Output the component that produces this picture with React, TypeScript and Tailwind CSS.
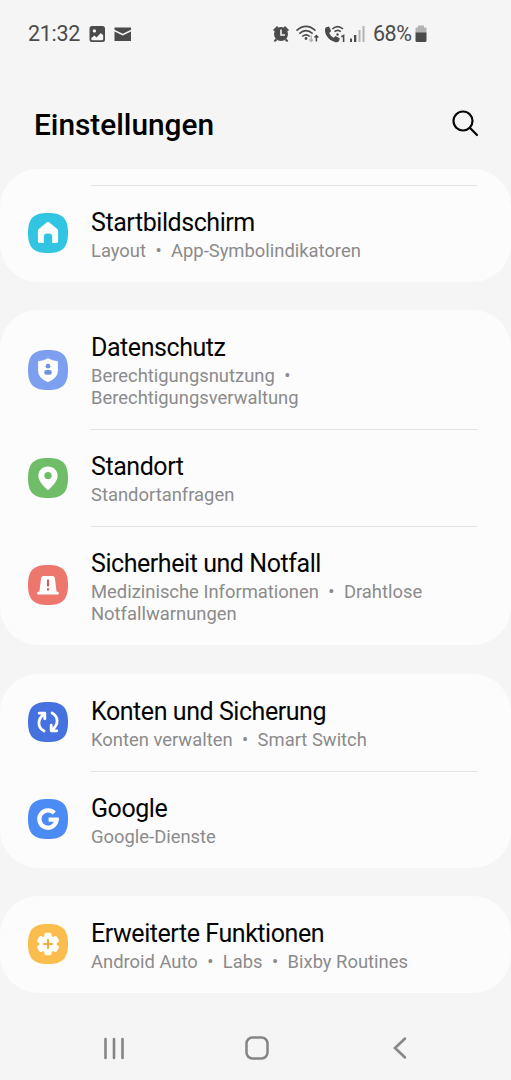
import React from 'react';

interface Item {
  title: string;
  lines: string[][];
  color: string;
  glyph: React.ReactNode;
}

const SQUIRCLE = 'M20 0C34.5 0 40 5.5 40 20S34.5 40 20 40 0 34.5 0 20 5.5 0 20 0Z';

const home: Item = {
  title: 'Startbildschirm',
  lines: [['Layout', 'App-Symbolindikatoren']],
  color: '#32c5e2',
  glyph: (
    <path
      d="M19 9.2a1.6 1.6 0 0 1 2 0l8 6.500q1.100.9 1.100 2.200v10.300q0 1.800-1.800 1.800h-4.100v-6.600a3 3 0 0 0-3-3h-2.400a3 3 0 0 0-3 3V30h-4.100q-1.800 0-1.800-1.800V17.900q0-1.300 1.100-2.200Z"
      fill="#fff"
    />
  ),
};

const privacy: Item[] = [
  {
    title: 'Datenschutz',
    lines: [['Berechtigungsnutzung', ''], ['Berechtigungsverwaltung']],
    color: '#7ca0ef',
    glyph: (
      <>
        <path d="M20 8.2q4.2 2.3 9.9 3v9.3c0 5.5-3.6 8.7-9.9 11.7-6.3-3-9.9-6.2-9.9-11.7v-9.3q5.700-.7 9.900-3Z" fill="#fff" />
        <circle cx="20" cy="16.200" r="2.400" fill="#7193df" />
        <rect x="16.200" y="20" width="7.600" height="4.800" rx="2.400" fill="#7193df" />
      </>
    ),
  },
  {
    title: 'Standort',
    lines: [['Standortanfragen']],
    color: '#6fbd69',
    glyph: (
      <>
        <path d="M20 8.500c5.500 0 9.600 4 9.600 9.300 0 5.200-4.700 9.900-8.300 13.500q-1.300 1.200-2.600 0C15.100 27.700 10.400 23 10.400 17.800c0-5.300 4.100-9.300 9.600-9.300Z" fill="#fff" />
        <circle cx="20" cy="17.600" r="3.700" fill="#6fbd69" />
      </>
    ),
  },
  {
    title: 'Sicherheit und Notfall',
    lines: [['Medizinische Informationen', 'Drahtlose'], ['Notfallwarnungen']],
    color: '#ed766d',
    glyph: (
      <>
        <path d="M15.600 11h8.800q2.200 0 2.500 2.200l1.700 13.500h1q1.100 0 1.100 1.100v1.700H9.300v-1.700q0-1.100 1.100-1.100h1l1.700-13.500q.3-2.200 2.500-2.200Z" fill="#fff" />
        <path d="M19 14.400h2v7.200h-2zM19 23.200h2v2.300h-2z" fill="#e0584f" />
      </>
    ),
  },
];

const accounts: Item[] = [
  {
    title: 'Konten und Sicherung',
    lines: [['Konten verwalten', 'Smart Switch']],
    color: '#4672e0',
    glyph: (
      <g fill="none" stroke="#fff" strokeWidth="2.800" strokeLinecap="round" strokeLinejoin="round">
        <path d="M16 29C9.400 25.700 9 17.500 16 12.200M11.200 11.200h5.600v5.600" />
        <path d="M24 11c6.600 3.300 7 11.500 0 16.800M28.800 28.800h-5.600v-5.600" />
      </g>
    ),
  },
  {
    title: 'Google',
    lines: [['Google-Dienste']],
    color: '#4b8bf3',
    glyph: <path d="M26.300 14A8.700 8.700 0 1 0 28.700 20.700H20.600" fill="none" stroke="#fff" strokeWidth="4.200" />,
  },
];

const advanced: Item = {
  title: 'Erweiterte Funktionen',
  lines: [['Android Auto', 'Labs', 'Bixby Routines']],
  color: '#fcbd4f',
  glyph: (
    <>
      <g fill="#fff">
        <circle cx="20" cy="20" r="8.700" />
        <rect x="16.500" y="8.700" width="7" height="22.600" rx="1.800" />
        <rect x="16.500" y="8.700" width="7" height="22.600" rx="1.800" transform="rotate(60 20 20)" />
        <rect x="16.500" y="8.700" width="7" height="22.600" rx="1.800" transform="rotate(120 20 20)" />
      </g>
      <path d="M20 15.300v9.400M15.300 20h9.400" stroke="#f0aa39" strokeWidth="2" />
    </>
  ),
};

function Row({ item, divider }: { item: Item; divider?: boolean }) {
  return (
    <div className="flex pl-7 pr-[34px]">
      <div className="flex w-[63px] shrink-0 items-center pb-[2px]">
        <svg width="40" height="40" viewBox="0 0 40 40">
          <path d={SQUIRCLE} fill={item.color} />
          {item.glyph}
        </svg>
      </div>
      <div className={`flex-1 pb-5 pt-[22px] ${divider ? 'border-b border-[#e3e3e3]' : ''}`}>
        <div className="mb-[2px] text-[25px] leading-[30px] tracking-[-0.440px] text-[#050505]">{item.title}</div>
        {item.lines.map((parts, i) => (
          <div key={i} className="flex text-[18.400px] leading-[22px] text-[#8b8b8b]">
            {parts.map((part, j) => (
              <React.Fragment key={j}>
                {j > 0 && <span className="w-[25px] text-center">•</span>}
                <span>{part}</span>
              </React.Fragment>
            ))}
          </div>
        ))}
      </div>
    </div>
  );
}

function Card({ items }: { items: Item[] }) {
  return (
    <section className="rounded-[38px] bg-[#fcfcfc] pt-px">
      {items.map((item, i) => (
        <Row key={item.title} item={item} divider={i < items.length - 1} />
      ))}
    </section>
  );
}

function StatusBar() {
  return (
    <div className="flex h-[68px] items-center pl-7 text-[21.500px] tracking-[-0.300px] text-[#4b4b4b]">
      <span className="w-[61px]">21:32</span>
      {/* Notifications */}
      <svg width="44" height="20" viewBox="0 0 44 20" fill="#4b4b4b">
        <path fillRule="evenodd" d="M3 2h10.500a2.500 2.500 0 0 1 2.500 2.500v11a2.500 2.500 0 0 1-2.500 2.500H3a2.500 2.500 0 0 1-2.500-2.500v-11A2.500 2.500 0 0 1 3 2Zm2.400 3.200a1.700 1.700 0 1 0 0 3.400 1.700 1.700 0 0 0 0-3.400ZM2.300 14.900q0 1.300 1.300 1.300h9.300q1.300 0 1.300-1.300v-3.600l-2.400-2.400-4.300 4.500-2-1.900-3.200 2.600Z" />
        <path d="M25.500 3.500H42v2.300l-8.200 4-8.300-4ZM25.500 7.500l8.300 4 8.200-4V17H25.500Z" />
      </svg>
      {/* Connectivity */}
      <svg className="ml-[139px]" width="94" height="20" viewBox="0 0 94 20">
        <g fill="#4b4b4b">
          <circle cx="9" cy="10" r="7" />
          <path d="m1 6 4-4 1.400 1.300-4 4ZM17 6l-4-4-1.400 1.300 4 4ZM3.500 14.500 1.700 17l1.300 1 2.400-2ZM14.500 14.500l1.800 2.500-1.300 1-2.400-2Z" />
          <circle cx="34" cy="14.500" r="1.400" />
          <path d="M54.200 3.300 57 2.500l2.200 4.600-2 1.900q1.300 3.100 4.400 4.800l2-1.700 4.300 2.500-1 2.700q-1.300 1.500-4 .8C56.200 16 52.600 10.500 53 5.300q.2-1.300 1.200-2Z" />
          <circle cx="65.500" cy="10.500" r="1.200" />
          <path d="M78 14.500h2V18h-2zM82 11h2.300v7H82z" />
        </g>
        <path d="M9 5.500V11h4" fill="none" stroke="#f5f5f5" strokeWidth="1.600" />
        <g fill="none" stroke="#4b4b4b" strokeWidth="1.600">
          <path d="M24.500 6.700q9.500-8.500 19 0M27.300 9.700q6.700-6 13.400 0M30.200 12.500q3.800-3.300 7.600 0" />
          <path d="M60.300 5q5.300-4.700 10.700 0M62.500 7.700q3.200-2.700 6.300 0" />
          <path d="M44.400 17.500v-5.700M42.500 13.500l1.900-2 1.900 2" strokeWidth="1.500" />
          <path d="M69.300 12.800l2.300-1.300V18" />
        </g>
        <path d="M39.200 11.500v5.700M37.300 15.500l1.900 2 1.900-2" fill="none" stroke="#b3b3b3" strokeWidth="1.500" />
        <path d="M86.500 6h2v12h-2zM90.500 2h2v16h-2z" fill="#b3b3b3" />
      </svg>
      <span className="ml-[7px] w-[42px] tracking-[-0.500px]">68%</span>
      <svg width="12" height="20" viewBox="0 0 12 20">
        <path d="M3 1.500h6v2h1.500q1 0 1 1V9H.5V4.500q0-1 1-1H3Z" fill="#b3b3b3" />
        <path d="M.5 8.500h11v8q0 1.500-1.500 1.500H2q-1.500 0-1.500-1.500Z" fill="#4b4b4b" />
      </svg>
    </div>
  );
}

export default function App() {
  return (
    <div className="flex h-[1080px] w-[511px] flex-col overflow-hidden bg-[#f5f5f5] font-[Roboto,sans-serif]">
      <StatusBar />
      <header className="flex h-[101px] items-start justify-between pl-[34px] pr-8 pt-[38px]">
        <h1 className="text-[29.800px] font-medium leading-[38px] text-black">Einstellungen</h1>
        <svg className="mt-[3px]" width="28" height="28" viewBox="0 0 28 28" fill="none" stroke="#050505" strokeWidth="2.200">
          <circle cx="12" cy="12" r="9.500" />
          <path d="m18.800 18.800 7.200 7.200" strokeLinecap="round" />
        </svg>
      </header>

      <main className="flex flex-col gap-[28.400px]">
        <section className="rounded-[38px] bg-[#fcfcfc] pt-4">
          <div className="ml-[91px] mr-[34px] h-px bg-[#e3e3e3]" />
          <Row item={home} />
        </section>
        <Card items={privacy} />
        <Card items={accounts} />
        <Card items={[advanced]} />
      </main>

      {/* Navigation bar */}
      <nav className="mt-auto flex h-[65px] items-center pl-[103px]">
        <svg width="22" height="24" viewBox="0 0 22 24" stroke="#858585" strokeWidth="2.600" strokeLinecap="round">
          <path d="M2.500 3v19M11 3v19M19.500 3v19" />
        </svg>
        <svg className="ml-[120px]" width="24" height="24" viewBox="0 0 24 24" fill="none" stroke="#858585" strokeWidth="2.500">
          <rect x="1.500" y="1.500" width="21" height="21" rx="6" />
        </svg>
        <svg className="ml-[124px]" width="14" height="24" viewBox="0 0 14 24" fill="none" stroke="#858585" strokeWidth="2.500" strokeLinecap="round">
          <path d="M12 2.500 2 12l10 9.500" />
        </svg>
      </nav>
    </div>
  );
}
